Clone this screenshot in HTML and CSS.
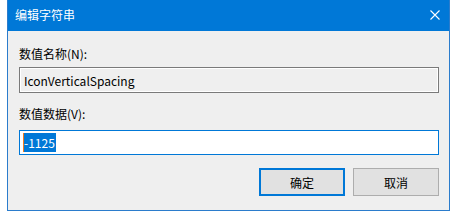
FILE: index.html
```html
<!DOCTYPE html>
<html>
<head>
<meta charset="utf-8">
<link rel="stylesheet" href="styles.css">
</head>
<body>
<div class="window">
  <div class="titlebar">
    <span class="title">编辑字符串</span>
    <svg class="close" width="10" height="10" viewBox="0 0 10 10"><path d="M0.5 0.5L9.5 9.5M9.5 0.5L0.5 9.5" stroke="#fff" stroke-width="1.1" fill="none"/></svg>
  </div>
  <div class="content">
    <div class="label label-first">数值名称(N):</div>
    <div class="field field-readonly">IconVerticalSpacing</div>
    <div class="label label-second">数值数据(V):</div>
    <div class="field field-edit"><span class="sel">-1125</span></div>
    <div class="buttons">
      <div class="btn btn-default">确定</div>
      <div class="btn">取消</div>
    </div>
  </div>
</div>
</body>
</html>
```

FILE: styles.css
```css
html, body {
  margin: 0;
  padding: 0;
  background: #ffffff;
}
body {
  font-family: "Noto Sans CJK SC", "Noto Sans", sans-serif;
  font-size: 12px;
  color: #000;
}
.window {
  margin-left: 7px;
  width: 441px;
  border: 1px solid #2b7ccc;
  border-top: none;
  background: #efefef;
}
.titlebar {
  height: 31px;
  background: #0078d7;
  display: flex;
  align-items: center;
  justify-content: space-between;
  padding-left: 7px;
  padding-right: 9px;
}
.title {
  color: #fff;
  font-size: 12px;
  line-height: 16px;
  margin-top: -1px;
}
.close {
  display: block;
  margin-top: -2px;
}
.content {
  padding: 15px 10px 14px 11px;
}
.label {
  line-height: 16px;
  height: 16px;
}
.label-first {
  margin-bottom: 5px;
}
.label-second {
  margin-top: 13px;
  margin-bottom: 8px;
}
.field {
  box-sizing: border-box;
  display: flex;
  align-items: center;
}
.field-readonly {
  height: 26px;
  border: 1px solid #7a7a7a;
  box-shadow: inset 0 0 0 1px #ffffff;
  background: #efefef;
  padding-left: 4px;
}
.field-edit {
  height: 25px;
  border: 1px solid #0078d7;
  background: #ffffff;
  padding-left: 3px;
}
.sel {
  background: #0078d7;
  color: #fff;
  line-height: 19px;
  padding-right: 1px;
  border-left: 1px solid #f07a20;
}
.buttons {
  display: flex;
  justify-content: flex-end;
  gap: 8px;
  margin-top: 13px;
}
.btn {
  box-sizing: border-box;
  width: 86px;
  height: 28px;
  background: #e1e1e1;
  border: 1px solid #adadad;
  display: flex;
  align-items: center;
  justify-content: center;
}
.btn-default {
  border: 2px solid #0078d7;
}
```
